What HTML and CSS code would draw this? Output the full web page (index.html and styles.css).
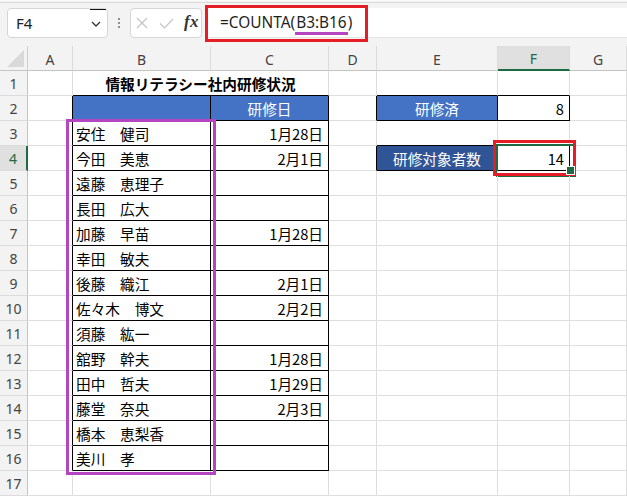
FILE: index.html
```html
<!DOCTYPE html>
<html lang="ja">
<head>
<meta charset="utf-8">
<title>Excel</title>
<link rel="stylesheet" href="styles.css">
</head>
<body>
<div class="topline"></div>
<div class="fbar">
  <div class="namebox">
    <span class="nb-text">F4</span>
    <span class="nb-mark"></span>
    <svg class="chev" width="10" height="6" viewBox="0 0 10 6"><path d="M1 1l4 4 4-4" fill="none" stroke="#333" stroke-width="1.3"/></svg>
  </div>
  <div class="dots">
    <svg width="4" height="12" viewBox="0 0 4 12"><circle cx="2" cy="2" r="1.1" fill="#777"/><circle cx="2" cy="6" r="1.1" fill="#777"/><circle cx="2" cy="10" r="1.1" fill="#777"/></svg>
  </div>
  <div class="fxbox">
    <svg class="ico" width="12" height="12" viewBox="0 0 12 12"><path d="M1 1l10 10M11 1L1 11" stroke="#c4c4c4" stroke-width="1.2" fill="none"/></svg>
    <svg class="ico chk" width="15" height="11" viewBox="0 0 15 11"><path d="M1 5.5l4.5 4.5L14 1" stroke="#c4c4c4" stroke-width="1.2" fill="none"/></svg>
    <span class="fx">fx</span>
  </div>
  <div class="formula">
    <span class="ftext">=COUNTA(<span class="ref">B3:B16</span>)</span>
    <div class="ann-red-f"></div>
  </div>
</div>

<div class="sheet">
  <div class="row hdr">
    <div class="corner"><span class="tri"></span></div>
    <div class="ch">A</div><div class="ch">B</div><div class="ch">C</div><div class="ch">D</div><div class="ch">E</div><div class="ch sel">F</div><div class="ch">G</div>
  </div>
  <div class="row">
    <div class="rh">1</div><div class="c"></div><div class="c span2 bB title">情報リテラシー社内研修状況</div><div class="c"></div><div class="c bB"></div><div class="c bB"></div><div class="c"></div>
  </div>
  <div class="row">
    <div class="rh">2</div><div class="c bR"></div><div class="c blue bR bB"></div><div class="c blue bR bB ctr">研修日</div><div class="c bR"></div><div class="c blue bR bB ctr">研修済</div><div class="c bR bB r">8</div><div class="c"></div>
  </div>
  <div class="row">
    <div class="rh">3</div><div class="c bR"></div><div class="c bR bB">安住　健司</div><div class="c bR bB r">1月28日</div><div class="c"></div><div class="c bB"></div><div class="c bB"></div><div class="c"></div>
  </div>
  <div class="row">
    <div class="rh rsel">4</div><div class="c bR"></div><div class="c bR bB">今田　美恵</div><div class="c bR bB r">2月1日</div><div class="c bR"></div><div class="c dblue bR bB ctr">研修対象者数</div><div class="c bR bB r active">14</div><div class="c"></div>
  </div>
  <div class="row">
    <div class="rh">5</div><div class="c bR"></div><div class="c bR bB">遠藤　恵理子</div><div class="c bR bB r"></div><div class="c"></div><div class="c"></div><div class="c"></div><div class="c"></div>
  </div>
  <div class="row">
    <div class="rh">6</div><div class="c bR"></div><div class="c bR bB">長田　広大</div><div class="c bR bB r"></div><div class="c"></div><div class="c"></div><div class="c"></div><div class="c"></div>
  </div>
  <div class="row">
    <div class="rh">7</div><div class="c bR"></div><div class="c bR bB">加藤　早苗</div><div class="c bR bB r">1月28日</div><div class="c"></div><div class="c"></div><div class="c"></div><div class="c"></div>
  </div>
  <div class="row">
    <div class="rh">8</div><div class="c bR"></div><div class="c bR bB">幸田　敏夫</div><div class="c bR bB r"></div><div class="c"></div><div class="c"></div><div class="c"></div><div class="c"></div>
  </div>
  <div class="row">
    <div class="rh">9</div><div class="c bR"></div><div class="c bR bB">後藤　織江</div><div class="c bR bB r">2月1日</div><div class="c"></div><div class="c"></div><div class="c"></div><div class="c"></div>
  </div>
  <div class="row">
    <div class="rh">10</div><div class="c bR"></div><div class="c bR bB">佐々木　博文</div><div class="c bR bB r">2月2日</div><div class="c"></div><div class="c"></div><div class="c"></div><div class="c"></div>
  </div>
  <div class="row">
    <div class="rh">11</div><div class="c bR"></div><div class="c bR bB">須藤　紘一</div><div class="c bR bB r"></div><div class="c"></div><div class="c"></div><div class="c"></div><div class="c"></div>
  </div>
  <div class="row">
    <div class="rh">12</div><div class="c bR"></div><div class="c bR bB">舘野　幹夫</div><div class="c bR bB r">1月28日</div><div class="c"></div><div class="c"></div><div class="c"></div><div class="c"></div>
  </div>
  <div class="row">
    <div class="rh">13</div><div class="c bR"></div><div class="c bR bB">田中　哲夫</div><div class="c bR bB r">1月29日</div><div class="c"></div><div class="c"></div><div class="c"></div><div class="c"></div>
  </div>
  <div class="row">
    <div class="rh">14</div><div class="c bR"></div><div class="c bR bB">藤堂　奈央</div><div class="c bR bB r">2月3日</div><div class="c"></div><div class="c"></div><div class="c"></div><div class="c"></div>
  </div>
  <div class="row">
    <div class="rh">15</div><div class="c bR"></div><div class="c bR bB">橋本　恵梨香</div><div class="c bR bB r"></div><div class="c"></div><div class="c"></div><div class="c"></div><div class="c"></div>
  </div>
  <div class="row">
    <div class="rh">16</div><div class="c bR"></div><div class="c bR bB">美川　孝</div><div class="c bR bB r"></div><div class="c"></div><div class="c"></div><div class="c"></div><div class="c"></div>
  </div>
  <div class="row">
    <div class="rh">17</div><div class="c"></div><div class="c"></div><div class="c"></div><div class="c"></div><div class="c"></div><div class="c"></div><div class="c"></div>
  </div>
  <div class="row">
    <div class="rh"></div><div class="c"></div><div class="c"></div><div class="c"></div><div class="c"></div><div class="c"></div><div class="c"></div><div class="c"></div>
  </div>

  <div class="ann-purple"></div>
  <div class="ann-red-cell"></div>
</div>
</body>
</html>
```

FILE: styles.css
```css
* { box-sizing: border-box; }

body {
  margin: 0;
  width: 627px;
  height: 496px;
  overflow: hidden;
  background: #f3f3f3;
  font-family: "Noto Sans", "Noto Sans CJK JP", sans-serif;
}

.topline {
  height: 3px;
  border-top: 1px solid #fbfbfb;
  border-bottom: 1px solid #dadada;
}

/* formula bar */
.fbar {
  height: 43px;
  padding-top: 5px;
  display: flex;
  align-items: flex-start;
}

.namebox {
  position: relative;
  margin-left: 7px;
  width: 101px;
  height: 30px;
  background: #fff;
  border: 1px solid #d6d6d6;
  border-radius: 4px;
  display: flex;
  align-items: center;
  padding-left: 8px;
}

.nb-text {
  font-size: 15px;
  color: #222;
  flex: 1;
}

.nb-mark {
  position: absolute;
  top: 0;
  left: 82px;
  width: 16px;
  height: 1px;
  background: #111;
}

.chev { margin-right: 6px; margin-top: 1px; }

.dots {
  width: 22px;
  height: 30px;
  display: flex;
  align-items: center;
  justify-content: center;
}

.fxbox {
  width: 72px;
  height: 30px;
  background: #fff;
  border: 1px solid #d6d6d6;
  border-radius: 4px;
  display: flex;
  align-items: center;
  padding-left: 5px;
}

.ico { margin-right: 10px; }
.chk { margin-right: 10px; margin-left: 1px; }

.fx {
  font-family: "Liberation Serif", "DejaVu Serif", serif;
  font-style: italic;
  font-weight: bold;
  font-size: 17px;
  color: #333;
  letter-spacing: 0.3px;
  margin-top: -2px;
}

.formula {
  position: relative;
  flex: 1;
  margin-left: 3px;
  height: 30px;
  background: #fff;
  border-bottom: 1px solid #e4e4e4;
  display: flex;
  align-items: center;
  padding-left: 15px;
}

.ftext {
  font-family: "Noto Sans", sans-serif;
  font-size: 15.4px;
  color: #1f1f1f;
  white-space: nowrap;
}

.ref {
  display: inline-block;
  line-height: 18px;
  border-bottom: 3px solid #b446c2;
  padding: 0 1px;
  margin-bottom: -3px;
}

.ann-red-f {
  position: absolute;
  left: 0;
  top: -3px;
  width: 163px;
  height: 37px;
  border: 3px solid #e51d27;
}

/* sheet */
.sheet {
  position: relative;
  background: #fff;
}

.row {
  display: grid;
  grid-template-columns: 28px 45px 138px 118px 48px 121px 72px 57px;
  height: 25px;
}

.hdr {
  background: #f3f3f3;
}

.corner {
  position: relative;
  border-right: 1px solid #cfcfcf;
  border-bottom: 1px solid #c4c4c4;
}

.tri {
  position: absolute;
  right: 3px;
  bottom: 3px;
  width: 0;
  height: 0;
  border-left: 17px solid transparent;
  border-bottom: 17px solid #d9d9d9;
}

.ch {
  border-right: 1px solid #dcdcdc;
  border-bottom: 1px solid #c4c4c4;
  display: flex;
  align-items: center;
  justify-content: center;
  font-size: 14px;
  color: #444;
  padding-top: 2px;
}

.ch.sel {
  background: #e0e0e0;
  color: #1e6b41;
  border-bottom: 2px solid #1e6b41;
}

.rh {
  background: #f3f3f3;
  border-right: 1px solid #c4c4c4;
  border-bottom: 1px solid #dcdcdc;
  display: flex;
  align-items: center;
  justify-content: center;
  font-size: 14px;
  color: #444;
}

.rh.rsel {
  background: #e0e0e0;
  color: #1e6b41;
  border-right: 2px solid #1e6b41;
}

.c {
  position: relative;
  border-right: 1px solid #dedede;
  border-bottom: 1px solid #dedede;
  display: flex;
  align-items: center;
  padding: 0 5px 0 3px;
  font-family: "Noto Sans CJK JP", sans-serif;
  font-size: 14.67px;
  color: #000;
  white-space: nowrap;
}

.span2 { grid-column: span 2; }

.title {
  justify-content: center;
  font-weight: bold;
  padding: 0;
}

.bR { border-right-color: #000; }
.bB { border-bottom-color: #000; }
.r { justify-content: flex-end; }
.ctr { justify-content: center; padding: 0; }

.blue {
  background: #4472c4;
  color: #fff;
}

.dblue {
  background: #2f5597;
  color: #fff;
}

.active::after {
  content: "";
  position: absolute;
  left: -2px;
  top: -2px;
  width: 76px;
  height: 29px;
  border: 2px solid #1e6b41;
}

.active::before {
  content: "";
  position: absolute;
  left: 68px;
  top: 20px;
  width: 7px;
  height: 7px;
  background: #1e6b41;
  border: 1px solid #fff;
  z-index: 2;
}

.ann-purple {
  position: absolute;
  left: 66px;
  top: 73px;
  width: 150px;
  height: 356px;
  border: 3px solid #b446c2;
}

.ann-red-cell {
  position: absolute;
  left: 493px;
  top: 94px;
  width: 83px;
  height: 36px;
  border: 3px solid #e51d27;
}
```
